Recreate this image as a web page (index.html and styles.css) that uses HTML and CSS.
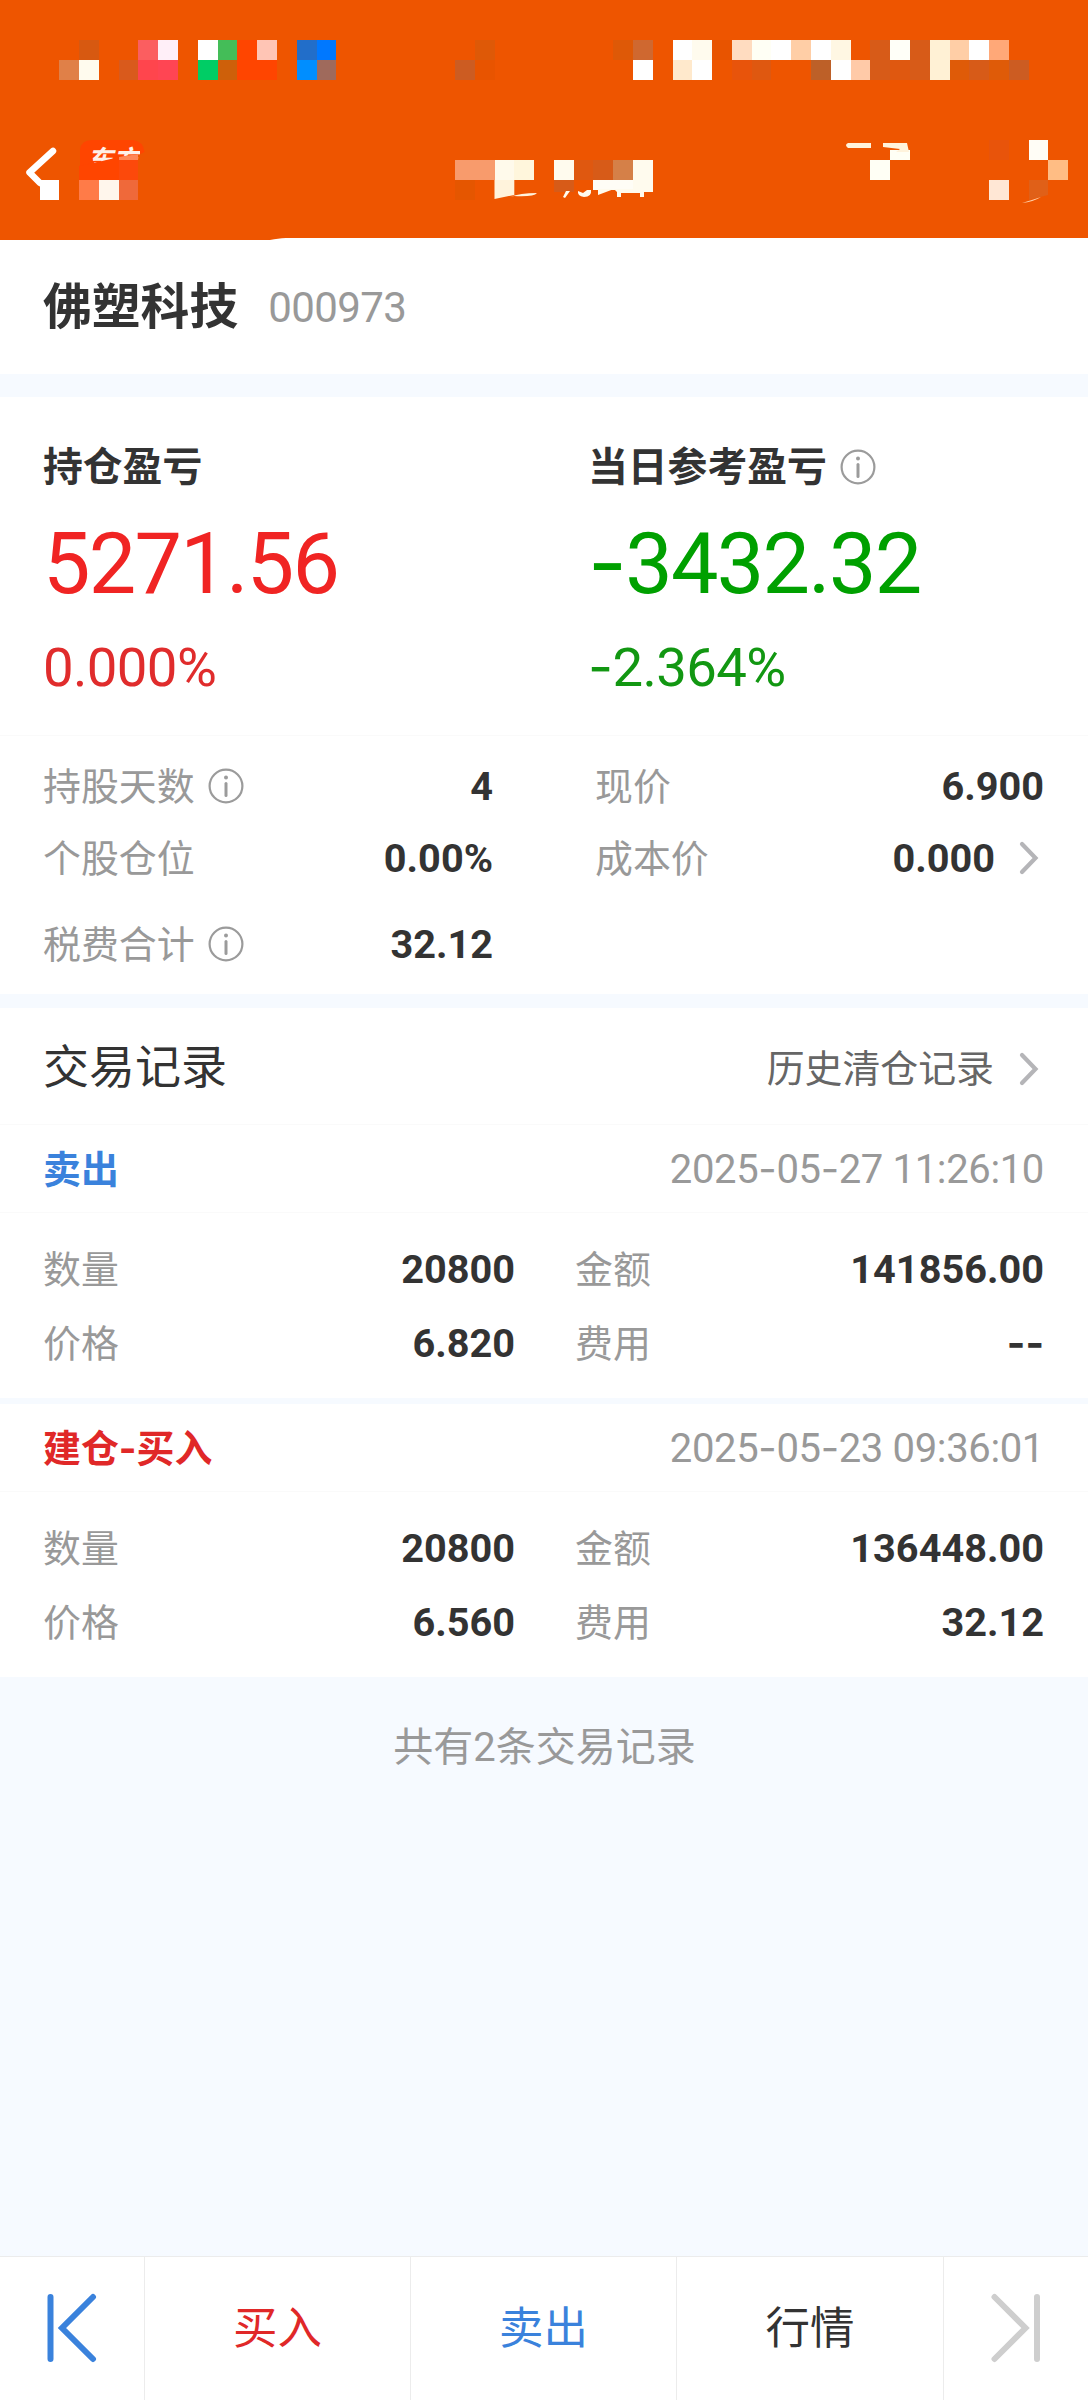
FILE: index.html
```html
<!DOCTYPE html>
<html lang="zh-CN">
<head>
<meta charset="utf-8">
<title>佛塑科技 000973</title>
<link rel="stylesheet" href="styles.css">
</head>
<body>
<svg class="sprite" aria-hidden="true">
  <symbol id="info" viewBox="0 0 36 36">
    <circle cx="18" cy="18" r="16.4" fill="none" stroke="currentColor" stroke-width="2.2"/>
    <circle cx="18" cy="9.6" r="2" fill="currentColor"/>
    <path d="M18 15.4V27.4" stroke="currentColor" stroke-width="3" stroke-linecap="round"/>
  </symbol>
  <symbol id="chevron" viewBox="0 0 20 34">
    <path d="M3 3L16.500 17L3 31" fill="none" stroke="currentColor" stroke-width="4.200" stroke-linecap="round"/>
  </symbol>
</svg>

<header class="topbar">
  <svg class="topbar-art" viewBox="0 0 1088 240" width="1088" height="240">
    <path d="M270 240C276 239 280 238 286 238H1088V240Z" fill="#fff"/>
    <path d="M53 151L29.500 172.500L40 183" fill="none" stroke="#fff" stroke-width="6.500" stroke-linecap="round" stroke-linejoin="round"/>
    <path d="M80 180V150Q81 140 92 140H133Q143 141 144.500 152L138 155V180Z" fill="#ff4500"/>
    <svg x="84" y="140" width="56" height="24" viewBox="0 0 56 24">
      <text class="logo-text" x="3" y="29">东方</text>
    </svg>
    <path d="M79 166L98 162L119 157L138 154V180H79Z" fill="#ff4500"/>
    <path d="M119 157L138 154V160H119Z" fill="#ff8656"/>
    <g transform="scale(19.782 20)" shape-rendering="crispEdges">
      <path d="M4 2h1v1h-1z" fill="#d75911"/><path d="M3 3h1v1h-1z" fill="#e08048"/><path d="M4 3h1v1h-1z" fill="#fffbee"/>
      <path d="M6 3h1v1h-1z" fill="#d95a1c"/><path d="M7 2h1v1h-1z" fill="#fb5e60"/><path d="M8 2h1v1h-1z" fill="#ffeff8"/><path d="M7 3h1v1h-1z" fill="#ff454d"/><path d="M8 3h1v1h-1z" fill="#ff4553"/>
      <path d="M10 2h1v1h-1z" fill="#fff"/><path d="M11 2h1v1h-1z" fill="#44bd58"/><path d="M10 3h1v1h-1z" fill="#00cd65"/><path d="M11 3h1v1h-1z" fill="#ce600a"/>
      <path d="M12 2h1v1h1v1h-2z" fill="#ff4500"/><path d="M13 2h1v1h-1z" fill="#ffc5b5"/>
      <path d="M15 2h1v1h-1z" fill="#226ec9"/><path d="M16 2h1v1h-1z" fill="#0078ff"/><path d="M15 3h1v1h-1z" fill="#008eff"/><path d="M16 3h1v1h-1z" fill="#9f6a5c"/>
      <path d="M24 2h1v1h-1z" fill="#de5907"/><path d="M23 3h1v1h-1z" fill="#cc5c22"/><path d="M24 3h1v1h-1z" fill="#e85400"/>
      <path d="M31 2h1v1h-1z" fill="#de5907"/><path d="M32 2h1v1h-1z" fill="#cf6830"/><path d="M32 3h1v1h-1z" fill="#fff"/>
      <path d="M34 2h1v1h-1z" fill="#fff"/><path d="M35 2h1v1h-1z" fill="#fffbee"/><path d="M34 3h1v1h-1z" fill="#ffe9cc"/><path d="M35 3h1v1h-1z" fill="#fff"/>
      <path d="M36 2h1v1h-1z" fill="#e85400"/><path d="M37 2h1v1h-1z" fill="#ffdcc0"/><path d="M38 2h1v1h-1z" fill="#fffff5"/><path d="M39 2h1v1h-1z" fill="#fff"/><path d="M40 2h1v1h-1z" fill="#ffcea6"/><path d="M41 2h1v1h-1z" fill="#fff"/><path d="M42 2h1v1h-1z" fill="#fff7e3"/>
      <path d="M37 3h1v1h-1z" fill="#e8540b"/><path d="M38 3h1v1h-1z" fill="#df5810"/><path d="M41 3h1v1h-1z" fill="#bd6028"/><path d="M42 3h1v1h-1z" fill="#fff"/><path d="M43 3h1v1h-1z" fill="#ffcaa8"/>
      <path d="M44 2h1v2h-1z" fill="#d75b18"/><path d="M45 2h1v1h-1z" fill="#fffff8"/><path d="M45 3h1v1h-1z" fill="#df5810"/><path d="M46 2h1v2h-1z" fill="#d75b18"/><path d="M47 2h1v2h-1z" fill="#fff1d5"/>
      <path d="M48 2h1v1h-1z" fill="#ffcea6"/><path d="M49 2h1v1h-1z" fill="#fff"/><path d="M50 2h1v1h-1z" fill="#ffa878"/><path d="M48 3h1v1h-1z" fill="#df5b08"/><path d="M49 3h1v1h-1z" fill="#d75b18"/><path d="M50 3h1v1h-1z" fill="#df5b08"/><path d="M51 3h1v1h-1z" fill="#cc5c22"/>
      <path d="M2 9h1v1h-1z" fill="#fff"/><path d="M4 9h1v1h-1z" fill="#ff7b48"/><path d="M5 9h1v1h-1z" fill="#fff6ec"/><path d="M6 9h1v1h-1z" fill="#ef693a"/><path d="M6 8h1v1h-1z" fill="#fc490b"/>
      <path d="M23 8h2v1h-2z" fill="#f89b6c"/><path d="M25 8h1v1h-1z" fill="#fffaeb"/><path d="M26 8h1v1h-1z" fill="#fff6dc"/><path d="M23 9h1v1h-1z" fill="#e55600"/>
      <path d="M28 8h1v1h-1z" fill="#fffbee"/><path d="M29 8h1v1h-1z" fill="#df5810"/><path d="M30 8h1v1h-1z" fill="#d75b18"/><path d="M31 8h1v1h-1z" fill="#d58048"/><path d="M32 8h1v1.600h-1z" fill="#fffbee"/>
      <path d="M28 9h1v.6h-1z" fill="#d75b18"/><path d="M30 9h2v.5h-2z" fill="#fffdf6"/>
      <path d="M45 7.500h1v.5h-1zM44 8h1v1h-1z" fill="#fffff5"/><path d="M50 7h1v1h-1z" fill="#e8540b"/><path d="M52 7h1v1h-1z" fill="#fffdf6"/><path d="M53 8h1v1h-1z" fill="#ffbd84"/><path d="M50 9h1v1h-1z" fill="#ffe7d5"/>
    </g>
    <path d="M494.500 180H514.300V195L494.500 199Z" fill="#fff3dc"/>
    <path d="M510 197Q520 193 537 193Q534 197 514 196Z" fill="#fff3dc"/>
    <path d="M563 197L566 191H570L565 198ZM578 191L583 193L587 190H591Q592 197 584 197Q577 196 578 191ZM598 189H614L598 195ZM614 189H653V192H644V197H640V193H621V197H617V192Z" fill="#fffbee"/>
    <path d="M848 143H871V148H848Q844 145 848 143ZM883 143H907L909 152H896L900 149L883 147Z" fill="#fff3dc"/>
    <path d="M1029 180H1048V195L1029 200Z" fill="#e06018"/>
    <path d="M1022 203Q1033 202 1041 197Q1032 200 1022 203Z" fill="#ffd2aa"/>
  </svg>
</header>

<section class="stock panel">
  <h1 class="stock-name">佛塑科技</h1>
  <span class="stock-code">000973</span>
</section>

<section class="summary panel">
  <div class="profit up">
    <h2 class="profit-title">持仓盈亏</h2>
    <p class="profit-value">5271.56</p>
    <p class="profit-rate">0.000%</p>
  </div>
  <div class="profit down">
    <h2 class="profit-title">当日参考盈亏<svg class="info"><use href="#info"/></svg></h2>
    <p class="profit-value"><span class="dash">-</span>3432.32</p>
    <p class="profit-rate"><span class="dash">-</span>2.364%</p>
  </div>
</section>

<section class="facts panel">
  <div class="fact"><span class="label">持股天数<svg class="info"><use href="#info"/></svg></span><b class="num">4</b></div>
  <div class="fact"><span class="label">现价</span><b class="num">6.900</b></div>
  <div class="fact"><span class="label">个股仓位</span><b class="num">0.00%</b></div>
  <div class="fact"><span class="label">成本价</span><b class="num">0.000</b><svg class="chevron"><use href="#chevron"/></svg></div>
  <div class="fact"><span class="label">税费合计<svg class="info"><use href="#info"/></svg></span><b class="num">32.12</b></div>
</section>

<section class="records">
  <div class="records-head panel">
    <h2 class="records-title">交易记录</h2>
    <a class="history">历史清仓记录<svg class="chevron"><use href="#chevron"/></svg></a>
  </div>

  <article class="record panel">
    <div class="record-head"><b class="side sell">卖出</b><time class="time">2025<span class="dash">-</span>05<span class="dash">-</span>27 11:26:10</time></div>
    <div class="record-body">
      <div class="fact"><span class="label">数量</span><b class="num">20800</b></div>
      <div class="fact"><span class="label">金额</span><b class="num">141856.00</b></div>
      <div class="fact"><span class="label">价格</span><b class="num">6.820</b></div>
      <div class="fact"><span class="label">费用</span><b class="num"><span class="dash">--</span></b></div>
    </div>
  </article>

  <article class="record panel">
    <div class="record-head"><b class="side buy">建仓<span class="dash">-</span>买入</b><time class="time">2025<span class="dash">-</span>05<span class="dash">-</span>23 09:36:01</time></div>
    <div class="record-body">
      <div class="fact"><span class="label">数量</span><b class="num">20800</b></div>
      <div class="fact"><span class="label">金额</span><b class="num">136448.00</b></div>
      <div class="fact"><span class="label">价格</span><b class="num">6.560</b></div>
      <div class="fact"><span class="label">费用</span><b class="num">32.12</b></div>
    </div>
  </article>
  <p class="count">共有2条交易记录</p>
</section>

<nav class="actions">
  <a class="action sell"><svg width="54" height="72" viewBox="0 0 54 72"><path d="M5.500 4V66M48 4L17 35L48 66" fill="none" stroke="currentColor" stroke-width="6" stroke-linecap="round"/></svg></a>
  <a class="action buy">买入</a>
  <a class="action sell">卖出</a>
  <a class="action">行情</a>
  <a class="action off"><svg width="54" height="72" viewBox="0 0 54 72"><path d="M48 4V66M5.500 4L36.500 35L5.500 66" fill="none" stroke="currentColor" stroke-width="6" stroke-linecap="round"/></svg></a>
</nav>
</body>
</html>
```
FILE: styles.css
```css
* { box-sizing: border-box; margin: 0; }

body {
  width: 1088px;
  min-height: 2400px;
  display: flex;
  flex-direction: column;
  background: #f6faff;
  color: #333;
  font-family: Roboto, "Noto Sans CJK SC", sans-serif;
}

.sprite { display: none; }
.panel { background: #fff; }
.dash { font-family: Inter, sans-serif; line-height: 0; }

.topbar { height: 240px; background: #ee5500; }
.topbar-art { display: block; }
.logo-text { font: italic 700 26px "Noto Sans CJK SC", sans-serif; fill: #fff0e8; }

.stock {
  height: 134px;
  padding: 0 44px 0 43px;
  display: flex;
  align-items: center;
  gap: 30px;
}
.stock-name { font-size: 48.800px; line-height: 60px; font-weight: 700; padding-top: 2px; }
.stock-code { font-size: 42px; line-height: 60px; letter-spacing: -.6px; padding-top: 2px; color: #999; }

.summary {
  margin-top: 23px;
  height: 339px;
  padding: 45px 44px 0 43px;
  display: grid;
  grid-template-columns: 545px 1fr;
  border-bottom: 1px solid #fafafa;
}
.profit-title {
  display: flex;
  align-items: center;
  gap: 13px;
  height: 50px;
  padding-top: 2px;
  font-size: 39.800px;
  line-height: 50px;
  font-weight: 700;
}
.profit-title .info { margin-top: -2px; }
.profit-value { margin-top: 28px; font-size: 84.500px; line-height: 90px; letter-spacing: -1.700px; }
.profit-rate { margin-top: 27px; font-size: 54.500px; line-height: 60px; letter-spacing: -.6px; }
.up .profit-value { color: #f02423; }
.up .profit-rate { color: #e02c2c; }
.down .profit-value { color: #00a000; }
.down .profit-rate { color: #129712; }

.info { width: 36px; height: 36px; flex: none; color: #9b9b9b; }
.chevron { width: 20px; height: 34px; flex: none; color: #b5b5b8; }

.facts {
  height: 258px;
  padding: 14px 44px 0 43px;
  display: grid;
  grid-template: 72px 72px 100px / 450px 449px;
  column-gap: 102px;
}
.fact { display: flex; align-items: center; }
.label {
  display: flex;
  align-items: center;
  gap: 13px;
  padding-top: 1px;
  font-size: 37.900px;
  line-height: 50px;
  color: #999;
}
.label .info { margin-top: -2px; }
.num { margin-left: auto; padding-top: 2px; font-size: 39.700px; line-height: 50px; font-weight: 700; }
.fact .chevron { margin: 0 5px 0 24px; }

.records { margin-top: 14px; }
.records-head {
  height: 117px;
  padding: 2px 44px 0 43px;
  display: flex;
  align-items: center;
  justify-content: space-between;
  border-bottom: 1px solid #fafafa;
}
.records-title { font-size: 46px; line-height: 60px; font-weight: 400; }
.history {
  display: flex;
  align-items: center;
  gap: 25px;
  padding: 3px 5px 0 0;
  font-size: 37.900px;
  line-height: 50px;
  color: #666;
}
.record + .record { margin-top: 6px; }
.record-head {
  height: 88px;
  padding: 2px 44px 0 43px;
  display: flex;
  align-items: center;
  justify-content: space-between;
  border-bottom: 1px solid #fafafa;
}
.side { font-size: 37.900px; line-height: 50px; }
.time { font-size: 40px; line-height: 50px; letter-spacing: -.35px; color: #999; }
.record-body {
  height: 185px;
  padding: 19px 44px 0 43px;
  display: grid;
  grid-template: 74px 74px / 472px 469px;
  column-gap: 60px;
}
.count { margin-top: 46px; padding-left: 1px; text-align: center; font-size: 40px; line-height: 50px; color: #999; }

.actions {
  margin-top: auto;
  height: 144px;
  display: grid;
  grid-template-columns: 145px 266px 266px 267px 144px;
  border-top: 1px solid #ececec;
  background: #fff;
}
.action {
  display: flex;
  align-items: center;
  justify-content: center;
  font-size: 44.500px;
  line-height: 60px;
  border-right: 1px solid #ececec;
}
.action:last-child { border-right: 0; }
.sell { color: #3a82dc; }
.buy { color: #e02828; }
.off { color: #cecece; }
```
